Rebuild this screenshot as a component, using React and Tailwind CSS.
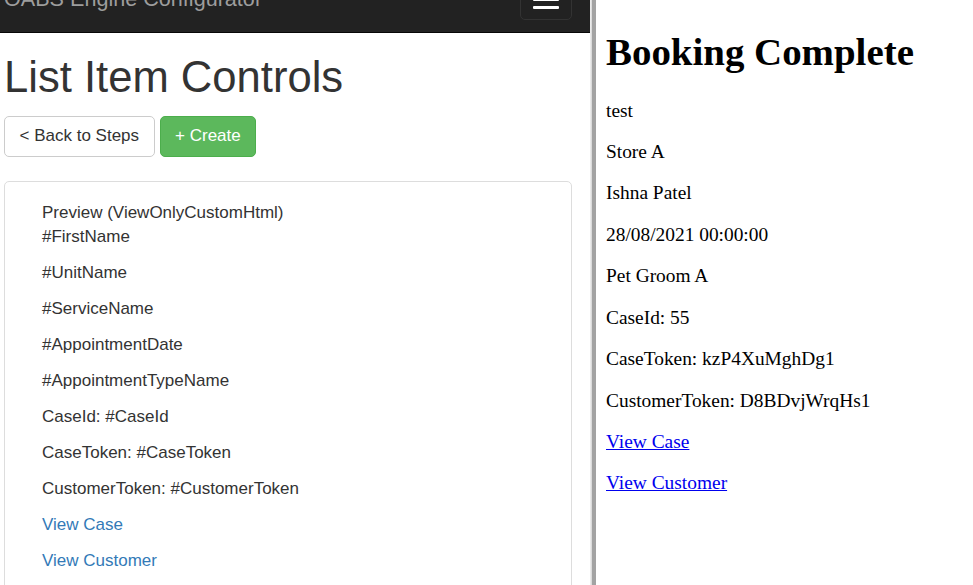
import React from "react";

const previewLines = [
  "#UnitName",
  "#ServiceName",
  "#AppointmentDate",
  "#AppointmentTypeName",
  "CaseId: #CaseId",
  "CaseToken: #CaseToken",
  "CustomerToken: #CustomerToken",
];

const bookingLines = [
  "Store A",
  "Ishna Patel",
  "28/08/2021 00:00:00",
  "Pet Groom A",
  "CaseId: 55",
  "CaseToken: kzP4XuMghDg1",
  "CustomerToken: D8BDvjWrqHs1",
];

const Navbar = () => (
  <div className="h-[33px] bg-[#222222] border-b border-[#080808] overflow-hidden flex items-start justify-between">
    <span className="mt-[-13px] pl-[4px] text-[21.6px] leading-[24px] text-[#9d9d9d] whitespace-nowrap">
      OABS Engine Configurator
    </span>
    <button className="mt-[-20px] mr-[18px] border border-[#333333] rounded-[5px] px-[12px] py-[10.8px] flex flex-col gap-[4.8px]">
      <span className="block w-[26px] h-[2.4px] bg-white rounded-[1px]"></span>
      <span className="block w-[26px] h-[2.4px] bg-white rounded-[1px]"></span>
      <span className="block w-[26px] h-[2.4px] bg-white rounded-[1px]"></span>
    </button>
  </div>
);

const ConfiguratorPane = () => (
  <div className="w-[590px] shrink-0 h-full overflow-hidden bg-white text-[#333333] font-['Liberation_Sans',Arial,sans-serif]">
    <Navbar />
    <div className="px-[4px] flex flex-col items-start">
      <h1 className="mt-[21px] text-[43.6px] leading-[47.5px] font-normal whitespace-nowrap">
        List Item Controls
      </h1>
      <div className="mt-[14px] flex gap-[5px]">
        <button className="h-[41px] px-[14.5px] border border-[#cccccc] rounded-[5px] bg-white text-[17px] text-[#333333]">
          &lt; Back to Steps
        </button>
        <button className="h-[41px] px-[14.5px] border border-[#4cae4c] rounded-[5px] bg-[#5cb85c] text-[17px] text-white">
          + Create
        </button>
      </div>
      <div className="mt-[24px] w-[568px] border border-[#dddddd] rounded-[5px] pl-[37px] pt-[19px] pb-[20px] text-[17px] leading-[24px]">
        <div>Preview (ViewOnlyCustomHtml)</div>
        <p className="mb-[12.1px]">#FirstName</p>
        {previewLines.map((line, index) => (
          <p key={index} className="mb-[12.1px]">
            {line}
          </p>
        ))}
        <p className="mb-[12.1px]">
          <a href="#" className="text-[#337ab7]">View Case</a>
        </p>
        <p className="mb-[12.1px]">
          <a href="#" className="text-[#337ab7]">View Customer</a>
        </p>
      </div>
    </div>
  </div>
);

const BookingPane = () => (
  <div className="flex-1 h-full overflow-hidden bg-white text-black font-['Liberation_Serif','Times_New_Roman',serif] text-[19.4px] leading-[22px] pl-[10px] flex flex-col items-start">
    <a href="#" className="mt-[-21px] text-[#0000ee] underline">Steps</a>
    <h1 className="mt-[29px] text-[38.9px] leading-[44px] font-bold whitespace-nowrap">
      Booking Complete
    </h1>
    <p className="mt-[25.5px]">test</p>
    {bookingLines.map((line, index) => (
      <p key={index} className="mt-[19.45px] whitespace-nowrap">
        {line}
      </p>
    ))}
    <p className="mt-[19.45px]">
      <a href="#" className="text-[#0000ee] underline">View Case</a>
    </p>
    <p className="mt-[19.45px]">
      <a href="#" className="text-[#0000ee] underline">View Customer</a>
    </p>
  </div>
);

export default function App() {
  return (
    <div className="w-full h-[585px] flex overflow-hidden bg-white">
      <ConfiguratorPane />
      <div className="w-[2px] shrink-0 h-full bg-gradient-to-r from-[#f2f2f2] to-[#d4d4d4]"></div>
      <div className="w-[4px] shrink-0 h-full bg-[#a3a3a3]"></div>
      <BookingPane />
    </div>
  );
}
